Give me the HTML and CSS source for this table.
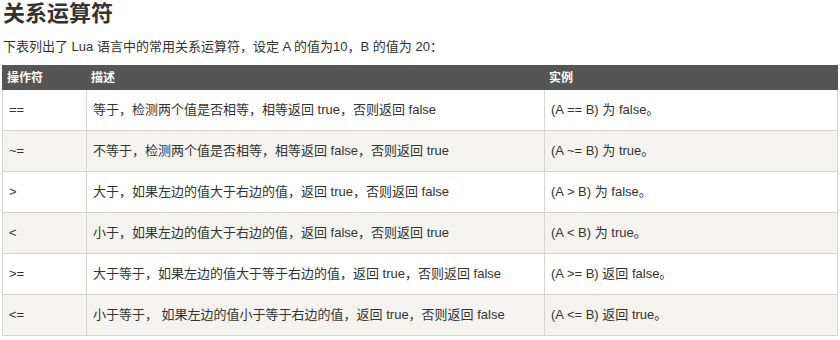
FILE: index.html
```html
<!DOCTYPE html>
<html lang="zh">
<head>
<meta charset="utf-8">
<title>关系运算符</title>
<link rel="stylesheet" href="styles.css">
</head>
<body>
<h2 class="title">关系运算符</h2>
<p class="intro">下表列出了 Lua 语言中的常用关系运算符，设定 A 的值为10，B 的值为 20：</p>
<table class="ops">
  <colgroup>
    <col class="c1"><col class="c2"><col class="c3">
  </colgroup>
  <thead>
    <tr><th>操作符</th><th>描述</th><th>实例</th></tr>
  </thead>
  <tbody>
    <tr><td>==</td><td>等于，检测两个值是否相等，相等返回 true，否则返回 false</td><td>(A == B) 为 false。</td></tr>
    <tr><td>~=</td><td>不等于，检测两个值是否相等，相等返回 false，否则返回 true</td><td>(A ~= B) 为 true。</td></tr>
    <tr><td>&gt;</td><td>大于，如果左边的值大于右边的值，返回 true，否则返回 false</td><td>(A &gt; B) 为 false。</td></tr>
    <tr><td>&lt;</td><td>小于，如果左边的值大于右边的值，返回 false，否则返回 true</td><td>(A &lt; B) 为 true。</td></tr>
    <tr><td>&gt;=</td><td>大于等于，如果左边的值大于等于右边的值，返回 true，否则返回 false</td><td>(A &gt;= B) 返回 false。</td></tr>
    <tr><td>&lt;=</td><td>小于等于， 如果左边的值小于等于右边的值，返回 true，否则返回 false</td><td>(A &lt;= B) 返回 true。</td></tr>
  </tbody>
</table>
</body>
</html>
```
FILE: styles.css
```css
html, body {
  margin: 0;
  padding: 0;
  background: #fff;
}
body {
  padding: 0 2px;
  font-family: "Liberation Sans", "Noto Sans CJK SC", sans-serif;
  color: #333;
}
.title {
  margin: 0;
  padding-left: 1px;
  font-size: 22px;
  line-height: 28px;
  font-weight: bold;
  color: #333;
}
.intro {
  margin: 9px 0 8px;
  padding-left: 1px;
  font-size: 13px;
  line-height: 20px;
}
.ops {
  border-collapse: collapse;
  table-layout: fixed;
  width: 835px;
  font-size: 13px;
  border: 1px solid #d4d4d4;
}
.ops .c1 { width: 84px; }
.ops .c2 { width: 458px; }
.ops .c3 { width: 293px; }
.ops th {
  background: #555;
  color: #fff;
  font-size: 12px;
  font-weight: bold;
  text-align: left;
  height: 23px;
  padding: 0 4px;
  border: 1px solid #555;
  line-height: 14px;
}
.ops td {
  height: 40px;
  padding: 0 6px;
  border: 1px solid #d4d4d4;
  line-height: 16px;
  white-space: nowrap;
}
.ops tbody tr:nth-child(even) td {
  background: #f4f3ef;
}
```
